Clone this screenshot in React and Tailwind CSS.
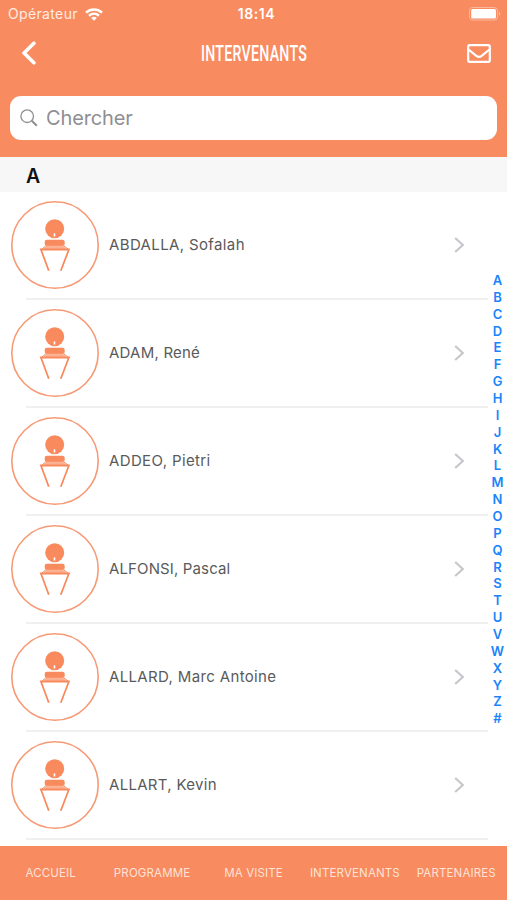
const speakers = [
  { name: 'ABDALLA, Sofalah', spacing: 'tracking-[0.37px]' },
  { name: 'ADAM, René', spacing: 'tracking-[0.22px]' },
  { name: 'ADDEO, Pietri', spacing: 'tracking-[0.37px]' },
  { name: 'ALFONSI, Pascal', spacing: 'tracking-[0.13px]' },
  { name: 'ALLARD, Marc Antoine', spacing: 'tracking-[0.35px]' },
  { name: 'ALLART, Kevin', spacing: 'tracking-[0.3px]' },
];

const letters = 'ABCDEFGHIJKLMNOPQRSTUVWXYZ#'.split('');

const tabs = ['ACCUEIL', 'PROGRAMME', 'MA VISITE', 'INTERVENANTS', 'PARTENAIRES'];

function StatusBar() {
  return (
    <div className="relative flex h-7 items-center justify-between pl-2 pr-[6px] text-white">
      <div className="flex items-center gap-[7px]">
        <span className="text-[14px] leading-7 tracking-[0.35px] text-[#ffece3]">Opérateur</span>
        <svg width="18" height="13" viewBox="0 0 18 13" fill="none" stroke="#fff" strokeWidth="2.5">
          <path d="M1 4.6C5.6 0.4 12.4 0.4 17 4.6" />
          <path d="M4 7.8C6.9 5.2 11.1 5.2 14 7.8" />
          <path d="M9 12.7L6.2 9.9C7.8 8.5 10.2 8.5 11.8 9.9Z" fill="#fff" stroke="none" />
        </svg>
      </div>
      <span className="absolute inset-x-0 pl-[6px] text-center text-[14px] font-semibold leading-7 tracking-[0.6px]">18:14</span>
      <svg width="32" height="14" viewBox="0 0 32 14">
        <rect x="0.5" y="0.5" width="28" height="12.5" rx="3.2" fill="none" stroke="#fff" strokeOpacity="0.4" />
        <rect x="2.2" y="2" width="24.8" height="9.5" rx="1.6" fill="#fff" />
        <path d="M30 4.7C31.6 5.4 31.6 8.1 30 8.8Z" fill="#fff" fillOpacity="0.5" />
      </svg>
    </div>
  );
}

function Avatar() {
  return (
    <svg className="shrink-0" width="88" height="88" viewBox="0 0 88 88" fill="none">
      <circle cx="44" cy="44" r="43.2" stroke="#f69a76" strokeWidth="1.6" />
      <circle cx="43.7" cy="27.7" r="9.5" fill="#f88a5e" />
      <path d="M43.5 32.3v3.2" stroke="#fff" strokeWidth="1.6" />
      <rect x="33.7" y="38.7" width="20" height="6.2" rx="2.2" fill="#f88a5e" />
      <path d="M35 44.7h17.5l2.5 3.3h-22.5z" fill="#fbb294" />
      <path d="M34.5 45L31 48M53 45L57 48" stroke="#f88a5e" strokeWidth="1" />
      <path d="M37.8 69.7L29.9 48.5H57.9L49.8 69.7" stroke="#f88a5e" strokeWidth="1.8" />
    </svg>
  );
}

export default function App() {
  return (
    <div className="relative flex h-[900px] w-[507px] flex-col overflow-hidden bg-white font-['Inter',sans-serif]">
      {/* Header */}
      <header className="h-[157px] shrink-0 bg-[#f88b5f]">
        <StatusBar />
        <div className="flex h-[50px] items-center justify-between pl-[21px] pr-[16px]">
          <svg width="16" height="24" viewBox="0 0 16 24" fill="none" stroke="#fff" strokeWidth="3.6" strokeLinecap="round" strokeLinejoin="round">
            <path d="M12.9 2.2L3 12L12.9 21.8" />
          </svg>
          <h1 className="ml-[4px] w-[200px] scale-x-[0.63] whitespace-nowrap text-center text-[22.5px] font-medium leading-none tracking-[0.4px] text-white font-['Roboto',sans-serif]">
            INTERVENANTS
          </h1>
          <svg width="24" height="19" viewBox="0 0 24 19" fill="none" stroke="#fff" strokeWidth="2.2" strokeLinejoin="round">
            <rect x="1.2" y="1.2" width="21.6" height="16.6" rx="1.5" />
            <path d="M1.5 5.5L9.3 11.9Q12 14 14.7 11.9L22.5 5.5" />
          </svg>
        </div>
        <div className="mx-[10px] mt-[18px] flex h-11 items-center rounded-[11px] bg-white pl-[10px]">
          <svg width="18" height="18" viewBox="0 0 18 18" fill="none" stroke="#8e8e93">
            <circle cx="7.2" cy="7.2" r="6.3" strokeWidth="1.3" />
            <path d="M11.8 11.8L16.8 16.8" strokeWidth="2" />
          </svg>
          <span className="ml-2 text-[20px] tracking-[-0.15px] text-[#8e8e93]">Chercher</span>
        </div>
      </header>

      <div className="flex h-[35px] shrink-0 items-center bg-[#f7f7f7] pl-[26px] pt-1 text-[19.5px] font-semibold text-[#111]">
        A
      </div>

      {/* Speakers */}
      <main className="min-h-0 flex-1 overflow-hidden">
        {speakers.map((s) => (
          <div key={s.name} className="flex h-[108px] flex-col">
            <div className="flex h-[106px] items-center pl-[11px] pr-[42px]">
              <Avatar />
              <span className={`ml-[10px] flex-1 text-[15px] leading-5 text-[#5a5a5a] ${s.spacing}`}>{s.name}</span>
              <svg width="11" height="16" viewBox="0 0 11 16" fill="none" stroke="#c7c7cc" strokeWidth="2.2">
                <path d="M1.2 1L8.8 8L1.2 15" />
              </svg>
            </div>
            <div className="ml-[26px] mr-[19px] h-[2px] bg-[#f0f0f0]" />
          </div>
        ))}
      </main>

      {/* Alphabet index */}
      <div className="absolute right-0 top-[272px] flex h-[455px] w-[19px] flex-col text-[13px] font-semibold text-[#1a84fa]">
        {letters.map((l) => (
          <span key={l} className="flex min-h-0 flex-1 items-center justify-center leading-none">{l}</span>
        ))}
      </div>

      <nav className="grid h-[54px] shrink-0 grid-cols-5 items-center bg-[#f88b5f] pt-[2px] text-[11.5px] text-[#ffe3d7]">
        {tabs.map((t) => (
          <span key={t} className="whitespace-nowrap text-center tracking-[0.15px]">{t}</span>
        ))}
      </nav>
    </div>
  );
}
